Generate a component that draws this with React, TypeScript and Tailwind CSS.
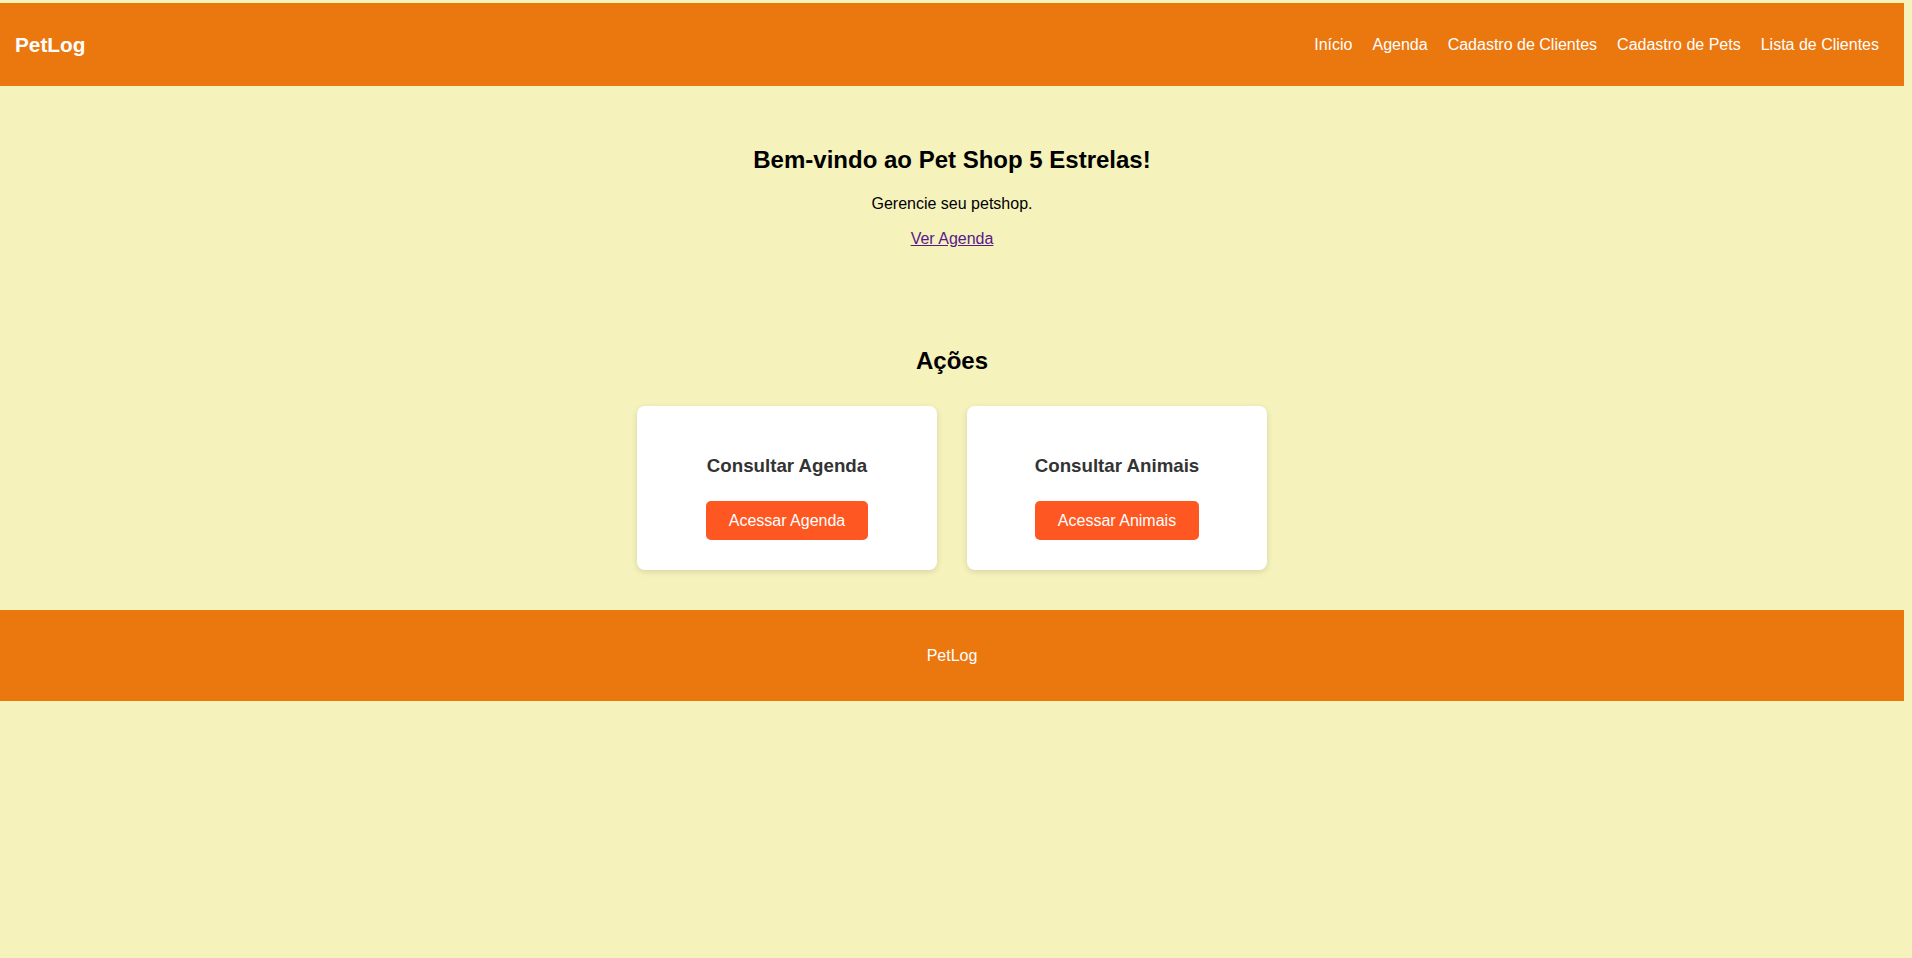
import React from 'react';

const navLinks = ['Início', 'Agenda', 'Cadastro de Clientes', 'Cadastro de Pets', 'Lista de Clientes'];

const actions = [
  { title: 'Consultar Agenda', label: 'Acessar Agenda' },
  { title: 'Consultar Animais', label: 'Acessar Animais' },
];

// Card for the "Ações" section
const ActionCard = ({ title, label }: { title: string; label: string }) => (
  <div className="w-[300px] h-[164px] bg-white rounded-[8px] shadow-[0_2px_6px_rgba(0,0,0,0.12)] px-[30px] pt-[49px] text-center">
    <h3 className="text-[18.72px] leading-[21px] font-bold text-[#333333]">{title}</h3>
    <button className="mt-[25px] h-[39px] px-[23px] bg-[#ff5722] text-white text-[16px] rounded-[5px]">
      {label}
    </button>
  </div>
);

const App = () => {
  return (
    <div className="min-h-screen bg-[#f6f2bc] pt-[3px] text-black font-['Liberation_Sans',Arial,sans-serif]">
      {/* Header */}
      <header className="w-[1904px] h-[83px] bg-[#eb770f] flex items-center justify-between pl-[15px] pr-[15px]">
        <span className="text-white font-bold text-[20.8px]">PetLog</span>
        <nav className="flex items-center">
          {navLinks.map((link) => (
            <a key={link} href="#" className="text-white text-[16px] mx-[10px]">
              {link}
            </a>
          ))}
        </nav>
      </header>

      {/* Hero */}
      <section className="w-[1904px] text-center pt-[60px]">
        <h2 className="text-[24px] leading-[28px] font-bold">Bem-vindo ao Pet Shop 5 Estrelas!</h2>
        <p className="mt-[21px] text-[16px] leading-[18px]">Gerencie seu petshop.</p>
        <p className="mt-[17px] text-[16px] leading-[18px]">
          <a href="#" className="text-[#551a8b] underline">Ver Agenda</a>
        </p>
      </section>

      {/* Actions */}
      <section className="w-[1904px] text-center pt-[99px]">
        <h2 className="text-[24px] leading-[28px] font-bold">Ações</h2>
        <div className="flex justify-center gap-[30px] mt-[31px]">
          {actions.map((action) => (
            <ActionCard key={action.title} title={action.title} label={action.label} />
          ))}
        </div>
      </section>

      {/* Footer */}
      <footer className="w-[1904px] h-[91px] mt-[40px] bg-[#eb770f] flex items-center justify-center">
        <span className="text-white text-[16px]">PetLog</span>
      </footer>
    </div>
  );
};

export default App;
